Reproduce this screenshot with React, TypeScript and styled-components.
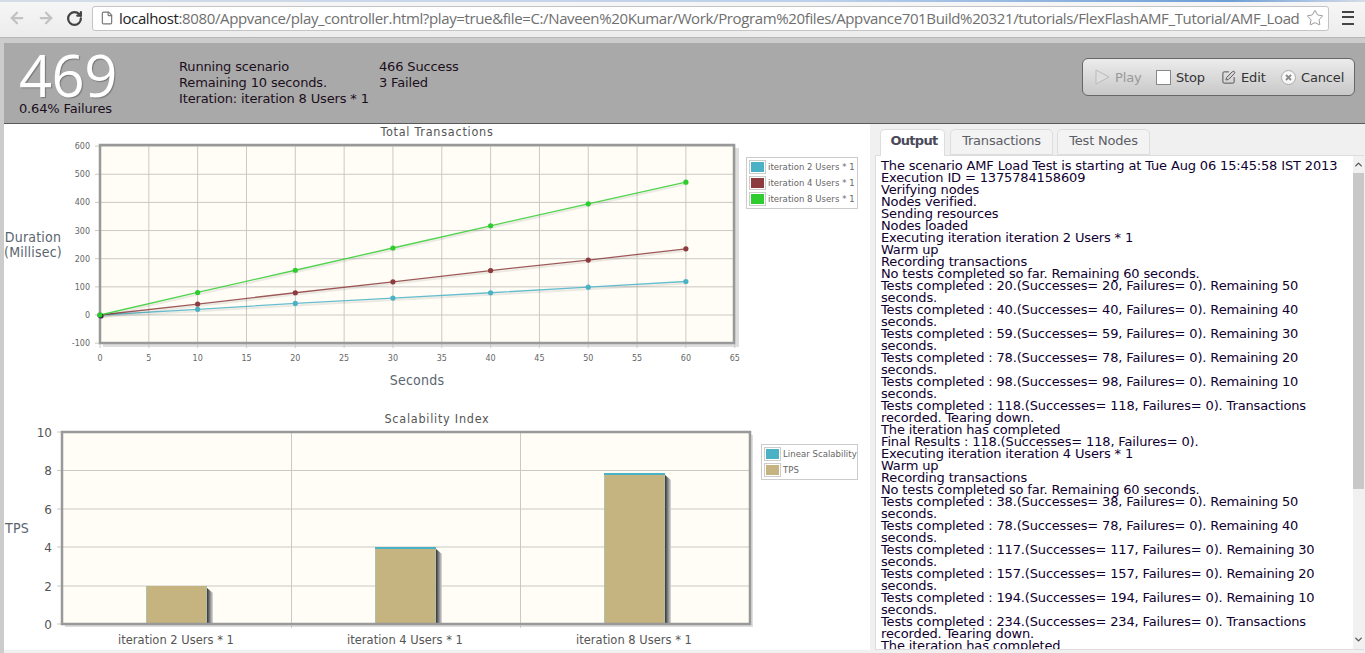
import styled, { createGlobalStyle } from "styled-components";
import { ArrowLeft, ArrowRight, ChevronDown, ChevronUp, File, RotateCw, SquarePen, Star } from "lucide-react";

const GRID = "#cbc9c4";
const TEAL = "#4bb2c5";
const BROWN = "#8c3c3e";
const GREEN = "#2fcc30";
const TAN = "#c5b47f";

const logLines = [
  "The scenario AMF Load Test is starting at Tue Aug 06 15:45:58 IST 2013",
  "Execution ID = 1375784158609",
  "Verifying nodes",
  "Nodes verified.",
  "Sending resources",
  "Nodes loaded",
  "Executing iteration iteration 2 Users * 1",
  "Warm up",
  "Recording transactions",
  "No tests completed so far. Remaining 60 seconds.",
  "Tests completed : 20.(Successes= 20, Failures= 0). Remaining 50 seconds.",
  "Tests completed : 40.(Successes= 40, Failures= 0). Remaining 40 seconds.",
  "Tests completed : 59.(Successes= 59, Failures= 0). Remaining 30 seconds.",
  "Tests completed : 78.(Successes= 78, Failures= 0). Remaining 20 seconds.",
  "Tests completed : 98.(Successes= 98, Failures= 0). Remaining 10 seconds.",
  "Tests completed : 118.(Successes= 118, Failures= 0). Transactions recorded. Tearing down.",
  "The iteration has completed",
  "Final Results : 118.(Successes= 118, Failures= 0).",
  "Executing iteration iteration 4 Users * 1",
  "Warm up",
  "Recording transactions",
  "No tests completed so far. Remaining 60 seconds.",
  "Tests completed : 38.(Successes= 38, Failures= 0). Remaining 50 seconds.",
  "Tests completed : 78.(Successes= 78, Failures= 0). Remaining 40 seconds.",
  "Tests completed : 117.(Successes= 117, Failures= 0). Remaining 30 seconds.",
  "Tests completed : 157.(Successes= 157, Failures= 0). Remaining 20 seconds.",
  "Tests completed : 194.(Successes= 194, Failures= 0). Remaining 10 seconds.",
  "Tests completed : 234.(Successes= 234, Failures= 0). Transactions recorded. Tearing down.",
  "The iteration has completed",
];

const lineSeries = [
  { color: TEAL, label: "iteration 2 Users * 1", values: [0, 20, 41, 60, 79, 99, 119] },
  { color: BROWN, label: "iteration 4 Users * 1", values: [0, 39, 79, 118, 158, 195, 235] },
  { color: GREEN, label: "iteration 8 Users * 1", values: [0, 80, 159, 238, 317, 395, 472] },
];

const barData = [
  { label: "iteration 2 Users * 1", x: 146, top: 586, linear: 586 },
  { label: "iteration 4 Users * 1", x: 375, top: 549, linear: 547 },
  { label: "iteration 8 Users * 1", x: 604, top: 475, linear: 473 },
];

const lineX = (v: number) => 100 + v * 9.765;
const lineY = (v: number) => 315 - v * 0.2815;

const GlobalStyle = createGlobalStyle`
  html, body {
    margin: 0;
    padding: 0;
    background: #ccc;
    overflow: hidden;
  }
`;

const Page = styled.div`
  width: 1365px;
  height: 653px;
  display: flex;
  flex-direction: column;
  overflow: hidden;
  font-family: "DejaVu Sans", Verdana, sans-serif;
  font-size: 13px;
  letter-spacing: -0.15px;
`;

const TabEdge = styled.div`
  height: 2px;
  background: linear-gradient(90deg, #d5dde8, #bcd0ea 60%, #6d9ed6 90%, #d5dde8);
`;

const BrowserBar = styled.div`
  height: 36px;
  box-sizing: border-box;
  display: flex;
  align-items: center;
  padding: 0 9px 3px 8px;
  background: linear-gradient(#f6f6f6, #ececec);
  border-bottom: 1px solid #b5b5b5;
`;

const NavButton = styled.div<{ $dark?: boolean; $gap: number }>`
  display: flex;
  margin-right: ${(p) => p.$gap}px;
  color: ${(p) => (p.$dark ? "#444" : "#c2c2c2")};
`;

const UrlBox = styled.div`
  width: 1237px;
  height: 25px;
  box-sizing: border-box;
  display: flex;
  align-items: center;
  padding: 0 4px 0 7px;
  background: #fff;
  border: 1px solid #c4c4c4;
  border-radius: 3px;
  color: #555;
`;

const UrlText = styled.div`
  flex: 1;
  min-width: 0;
  margin: 0 3px 0 5px;
  overflow: hidden;
  white-space: nowrap;
  font-family: "Open Sans", sans-serif;
  font-size: 15px;
  letter-spacing: -0.37px;
  color: #6f6f6f;

  b {
    font-weight: 400;
    color: #222;
  }
`;

const MenuIcon = styled.div`
  width: 12px;
  height: 10px;
  margin-left: 13px;
  border-top: 2px solid #444;
  border-bottom: 2px solid #444;
  position: relative;

  &::after {
    content: "";
    position: absolute;
    left: 0;
    right: 0;
    top: 3px;
    height: 2px;
    background: #444;
  }
`;

const Viewport = styled.div`
  flex: 1;
  min-height: 0;
  display: flex;
  flex-direction: column;
  padding: 5px 0 0 4px;
  background: #ccc;
`;

const StatusBar = styled.header`
  height: 81px;
  box-sizing: border-box;
  flex-shrink: 0;
  display: flex;
  align-items: flex-start;
  background: #a9a9a9;
  border-bottom: 1px solid #5a5a5a;
  color: #1c0f1c;
`;

const Score = styled.div`
  width: 175px;
  padding-left: 15px;
  box-sizing: border-box;
`;

const ScoreValue = styled.div`
  height: 58px;
  font-family: "Open Sans", sans-serif;
  font-weight: 400;
  font-size: 58px;
  letter-spacing: -0.6px;
  line-height: 64px;
  color: #fff;
  text-shadow: 1px 1px 1px #777;
`;

const ScoreCaption = styled.div`
  line-height: 16px;
`;

const StatusColumn = styled.div<{ $width: number }>`
  width: ${(p) => p.$width}px;
  padding-top: 16px;
  line-height: 16px;
  white-space: nowrap;
`;

const Controls = styled.div`
  margin: 15px 10px 0 auto;
  width: 273px;
  height: 38px;
  box-sizing: border-box;
  display: flex;
  align-items: center;
  padding-left: 12px;
  border: 1px solid #666;
  border-radius: 6px;
  background: linear-gradient(#ececec, #c8c8c8);
`;

const ControlButton = styled.div<{ $disabled?: boolean; $width: number }>`
  width: ${(p) => p.$width}px;
  flex-shrink: 0;
  display: flex;
  align-items: center;
  gap: 5px;
  color: ${(p) => (p.$disabled ? "#999" : "#333")};
`;

const StopBox = styled.span`
  width: 15px;
  height: 15px;
  background: #fff;
  border: 1px solid #888;
  box-sizing: border-box;
`;

const Content = styled.div`
  flex: 1;
  min-height: 0;
  display: flex;
  background: #f0f0f0;
`;

const ChartsPane = styled.main`
  width: 866px;
  height: 526px;
  flex-shrink: 0;
  background: #fff;
`;

const ChartTitle = styled.div<{ $top: number }>`
  height: 15px;
  margin-top: ${(p) => p.$top}px;
  text-align: center;
  font-family: "DejaVu Sans Condensed", "DejaVu Sans", sans-serif;
  font-size: 12.5px;
  letter-spacing: 0.75px;
  line-height: 15px;
  color: #555;
`;

const ChartRow = styled.div`
  display: flex;
  align-items: flex-start;
`;

const AxisLabel = styled.div<{ $width: number; $top: number; $after?: number }>`
  width: ${(p) => p.$width}px;
  margin-right: ${(p) => p.$after ?? 0}px;
  flex-shrink: 0;
  box-sizing: border-box;
  padding-top: ${(p) => p.$top}px;
  text-align: center;
  font-family: "DejaVu Sans Condensed", "DejaVu Sans", sans-serif;
  font-size: 14px;
  letter-spacing: 0.2px;
  line-height: 15px;
  color: #5a6570;
`;

const ChartSvg = styled.svg`
  display: block;
  flex-shrink: 0;
  font-family: "DejaVu Sans", sans-serif;
  letter-spacing: 0;
`;

const Legend = styled.div<{ $left: number; $top: number; $width: number }>`
  width: ${(p) => p.$width}px;
  margin: ${(p) => p.$top}px 0 0 ${(p) => p.$left}px;
  box-sizing: border-box;
  padding: 1px 2px;
  border: 1px solid #ccc;
  background: #fff;
`;

const LegendRow = styled.div`
  height: 16px;
  display: flex;
  align-items: center;
  gap: 2px;
  font-size: 8.5px;
  letter-spacing: 0.05px;
  color: #666;
  white-space: nowrap;
`;

const Swatch = styled.span<{ $color: string }>`
  width: 13px;
  height: 10px;
  padding: 1px;
  flex-shrink: 0;
  background: ${(p) => p.$color};
  background-clip: content-box;
  border: 1px solid #ccc;
`;

const SidePane = styled.aside`
  flex: 1;
  min-width: 0;
  display: flex;
  flex-direction: column;
  padding: 3px 1px 0 5px;
`;

const TabList = styled.nav`
  height: 28px;
  flex-shrink: 0;
  display: flex;
  align-items: flex-end;
  padding-left: 5px;
  border-bottom: 1px solid #ddd;
`;

const Tab = styled.div<{ $active?: boolean; $gap: number; $width: number }>`
  width: ${(p) => p.$width}px;
  height: ${(p) => (p.$active ? 27 : 26)}px;
  margin-right: ${(p) => p.$gap}px;
  margin-bottom: ${(p) => (p.$active ? -1 : 0)}px;
  padding-left: ${(p) => (p.$active ? 3 : 0)}px;
  box-sizing: border-box;
  text-align: center;
  line-height: 22px;
  letter-spacing: ${(p) => (p.$active ? "-0.7px" : "-0.2px")};
  font-weight: ${(p) => (p.$active ? 700 : 400)};
  color: ${(p) => (p.$active ? "#4a4a5a" : "#5d5d66")};
  background: ${(p) => (p.$active ? "#fff" : "#f3f3f3")};
  border: 1px solid #ddd;
  border-bottom: ${(p) => (p.$active ? "none" : "1px solid #ddd")};
  border-radius: 5px 5px 0 0;
`;

const LogPanel = styled.section`
  flex: 1;
  min-height: 0;
  display: flex;
  margin-bottom: 3px;
  background: #fff;
  border-left: 1px solid #ddd;
  border-bottom: 1px solid #ddd;
`;

const LogText = styled.div`
  flex: 1;
  min-width: 0;
  overflow: hidden;
  padding: 4px 6px 0 5px;
  font-size: 13px;
  letter-spacing: -0.15px;
  line-height: 12px;
  color: #100030;
`;

const LogLine = styled.div``;

const ScrollBar = styled.div`
  width: 11px;
  flex-shrink: 0;
  display: flex;
  flex-direction: column;
  align-items: center;
  padding: 3px 0 4px;
  background: #f1f1f1;
  color: #555;
`;

const ScrollThumb = styled.div`
  width: 100%;
  height: 316px;
  margin-top: 3px;
  margin-bottom: auto;
  background: #c8c8c8;
`;

const LineChart = () => {
  const yTicks = [600, 500, 400, 300, 200, 100, 0, -100];
  const xTicks = [0, 5, 10, 15, 20, 25, 30, 35, 40, 45, 50, 55, 60, 65];
  return (
    <ChartSvg width={676} height={250} viewBox="66 139 676 250">
      <rect x={103} y={148} width={636} height={199} fill="#000" opacity={0.13} />
      <rect x={100} y={145} width={634} height={198} fill="#fffdf6" />
      {yTicks.map((t) => (
        <g key={t}>
          <line x1={95} x2={734} y1={lineY(t)} y2={lineY(t)} stroke={GRID} />
          <text x={90} y={lineY(t) + 3} textAnchor="end" fontSize={8} fill="#666">{t}</text>
        </g>
      ))}
      {xTicks.map((t) => (
        <g key={t}>
          <line x1={lineX(t)} x2={lineX(t)} y1={145} y2={348} stroke={GRID} />
          <text x={lineX(t)} y={361} textAnchor="middle" fontSize={8} fill="#666">{t}</text>
        </g>
      ))}
      <rect x={100} y={145} width={634} height={198} fill="none" stroke="#999" strokeWidth={2.5} />
      {lineSeries.map((s) => (
        <g key={s.label}>
          <polyline
            points={s.values.map((v, i) => `${lineX(i * 10)},${lineY(v) + 2}`).join(" ")}
            fill="none"
            stroke="#000"
            strokeOpacity={0.08}
            strokeWidth={2}
          />
          <polyline
            points={s.values.map((v, i) => `${lineX(i * 10)},${lineY(v)}`).join(" ")}
            fill="none"
            stroke={s.color}
            strokeOpacity={0.85}
            strokeWidth={1.3}
          />
          {s.values.map((v, i) => (
            <circle key={i} cx={lineX(i * 10)} cy={lineY(v)} r={2.6} fill={s.color} />
          ))}
        </g>
      ))}
      <circle cx={101} cy={316} r={2.6} fill="#333" />
      <circle cx={100} cy={315} r={2.4} fill={GREEN} />
      <text x={417} y={385} textAnchor="middle" fontSize={14} fill="#5a6570" letterSpacing={0.2} fontFamily="DejaVu Sans Condensed, DejaVu Sans, sans-serif">
        Seconds
      </text>
    </ChartSvg>
  );
};

const BarChart = () => {
  const ticks = [
    { v: 10, y: 432 },
    { v: 8, y: 470.5 },
    { v: 6, y: 509 },
    { v: 4, y: 547 },
    { v: 2, y: 586 },
    { v: 0, y: 624 },
  ];
  return (
    <ChartSvg width={726} height={224} viewBox="30 426 726 224">
      <defs>
        <linearGradient id="barShadow" x1="0" x2="1" y1="0" y2="0">
          <stop offset="0" stopColor="#333" />
          <stop offset="0.4" stopColor="#777" />
          <stop offset="1" stopColor="#ddd" />
        </linearGradient>
      </defs>
      <rect x={65} y={435} width={688} height={192} fill="#000" opacity={0.13} />
      <rect x={62} y={432} width={688} height={192} fill="#fffdf6" />
      {ticks.map((t) => (
        <g key={t.v}>
          <line x1={57} x2={750} y1={t.y} y2={t.y} stroke={GRID} />
          <text x={52} y={t.y + 4.5} textAnchor="end" fontSize={12} fill="#555">{t.v}</text>
        </g>
      ))}
      {[291.5, 520.5].map((x) => (
        <line key={x} x1={x} x2={x} y1={432} y2={628} stroke={GRID} />
      ))}
      {barData.map((b) => (
        <g key={b.label}>
          <path
            d={`M${b.x + 61} ${b.linear + 2} L${b.x + 67} ${b.linear + 7} L${b.x + 67} 624 L${b.x + 61} 624 Z`}
            fill="url(#barShadow)"
          />
          <rect x={b.x} y={b.linear} width={61} height={624 - b.linear} fill={TEAL} opacity={0.6} />
          <rect x={b.x} y={b.linear} width={61} height={Math.max(b.top - b.linear, 0)} fill={TEAL} />
          <rect x={b.x + 0.5} y={b.top} width={60} height={624 - b.top} fill={TAN} />
          <text x={b.x + 30} y={644} textAnchor="middle" fontSize={11.5} fill="#555">{b.label}</text>
        </g>
      ))}
      <rect x={62} y={432} width={688} height={192} fill="none" stroke="#999" strokeWidth={2.5} />
    </ChartSvg>
  );
};

const App = () => {
  return (
    <Page>
      <GlobalStyle />
      <TabEdge />
      <BrowserBar>
        <NavButton $gap={11}><ArrowLeft size={18} strokeWidth={3} /></NavButton>
        <NavButton $gap={11}><ArrowRight size={18} strokeWidth={3} /></NavButton>
        <NavButton $dark $gap={9}><RotateCw size={17} strokeWidth={3.2} /></NavButton>
        <UrlBox>
          <File size={14} color="#777" />
          <UrlText>
            <b>localhost</b>:8080/Appvance/play_controller.html?play=true&amp;file=C:/Naveen%20Kumar/Work/Program%20files/Appvance701Build%20321/tutorials/FlexFlashAMF_Tutorial/AMF_Load
          </UrlText>
          <Star size={18} strokeWidth={1} color="#777" />
        </UrlBox>
        <MenuIcon />
      </BrowserBar>
      <Viewport>
        <StatusBar>
          <Score>
            <ScoreValue>469</ScoreValue>
            <ScoreCaption>0.64% Failures</ScoreCaption>
          </Score>
          <StatusColumn $width={200}>
            <div>Running scenario</div>
            <div>Remaining 10 seconds.</div>
            <div>Iteration: iteration 8 Users * 1</div>
          </StatusColumn>
          <StatusColumn $width={120}>
            <div>466 Success</div>
            <div>3 Failed</div>
          </StatusColumn>
          <Controls>
            <ControlButton $disabled $width={61}>
              <svg width={15} height={16} viewBox="0 0 15 16">
                <path d="M1 1 L14 8 L1 15 Z" fill="#dedede" stroke="#bbb" />
              </svg>
              Play
            </ControlButton>
            <ControlButton $width={65}>
              <StopBox />
              Stop
            </ControlButton>
            <ControlButton $width={60}>
              <SquarePen size={15} strokeWidth={1.6} color="#555" />
              Edit
            </ControlButton>
            <ControlButton $width={70}>
              <svg width={15} height={15} viewBox="0 0 15 15">
                <circle cx={7.5} cy={7.5} r={7} fill="#f8f8f8" stroke="#aaa" />
                <path d="M5 5 L10 10 M10 5 L5 10" stroke="#888" strokeWidth={1.8} />
              </svg>
              Cancel
            </ControlButton>
          </Controls>
        </StatusBar>
        <Content>
          <ChartsPane>
            <ChartTitle $top={0}>Total Transactions</ChartTitle>
            <ChartRow>
              <AxisLabel $width={58} $after={4} $top={91}>Duration<br />(Millisec)</AxisLabel>
              <LineChart />
              <Legend $left={4} $top={18} $width={112}>
                {lineSeries.map((s) => (
                  <LegendRow key={s.label}>
                    <Swatch $color={s.color} />
                    {s.label}
                  </LegendRow>
                ))}
              </Legend>
            </ChartRow>
            <ChartTitle $top={22}>Scalability Index</ChartTitle>
            <ChartRow>
              <AxisLabel $width={26} $top={95}>TPS</AxisLabel>
              <BarChart />
              <Legend $left={5} $top={18} $width={97}>
                <LegendRow>
                  <Swatch $color={TEAL} />
                  Linear Scalability
                </LegendRow>
                <LegendRow>
                  <Swatch $color={TAN} />
                  TPS
                </LegendRow>
              </Legend>
            </ChartRow>
          </ChartsPane>
          <SidePane>
            <TabList>
              <Tab $active $width={65} $gap={5}>Output</Tab>
              <Tab $width={103} $gap={4}>Transactions</Tab>
              <Tab $width={93} $gap={0}>Test Nodes</Tab>
            </TabList>
            <LogPanel>
              <LogText>
                {logLines.map((line, i) => (
                  <LogLine key={i}>{line}</LogLine>
                ))}
              </LogText>
              <ScrollBar>
                <ChevronUp size={11} strokeWidth={3} />
                <ScrollThumb />
                <ChevronDown size={11} strokeWidth={3} />
              </ScrollBar>
            </LogPanel>
          </SidePane>
        </Content>
      </Viewport>
    </Page>
  );
};

export default App;
